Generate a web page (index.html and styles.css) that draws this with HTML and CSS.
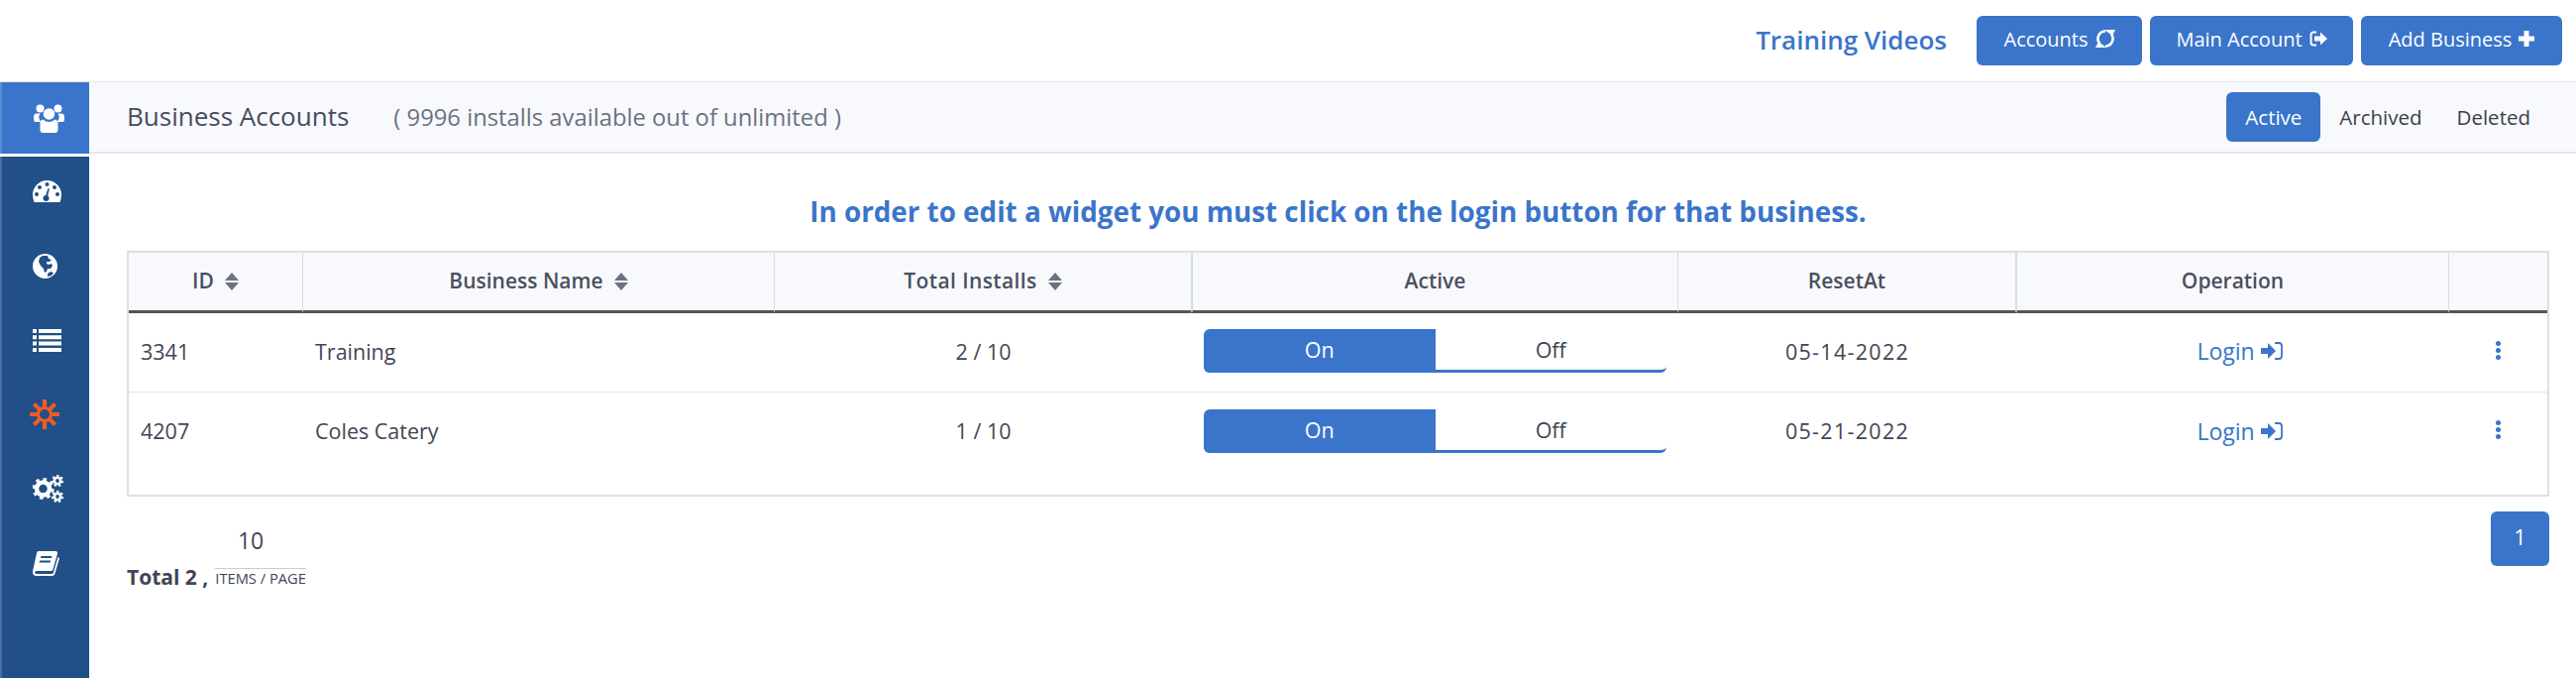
FILE: index.html
```html
<!DOCTYPE html>
<html lang="en">

<head>
  <meta charset="UTF-8">
  <meta name="viewport" content="width=device-width, initial-scale=1.0">
  <title>Business Accounts</title>
  <link rel="stylesheet" href="styles.css">
</head>

<body>
  <header class="topbar">
    <a class="training-link">Training Videos</a>
    <button class="btn btn-accounts">Accounts
      <svg class="btn-icon" width="20" height="24" viewBox="0 0 20 24"><path d="M10 4.500a7.500 7.500 0 0 0-6 12" fill="none" stroke="#fff" stroke-width="2.600"/><path d="M10 19.500a7.500 7.500 0 0 0 6-12" fill="none" stroke="#fff" stroke-width="2.600"/><path d="M9 3h11l-3 6zM11 21H0l3-6z" fill="#fff"/></svg>
    </button>
    <button class="btn btn-main">Main Account
      <svg class="btn-icon" width="18" height="16" viewBox="0 0 18 16"><path d="M7 1.500H4A2.500 2.500 0 0 0 1.500 4v8A2.500 2.500 0 0 0 4 14.500h3" fill="none" stroke="#fff" stroke-width="2"/><path d="M5 5.500h6V1.500L18 8l-7 6.500v-4H5z" fill="#fff"/></svg>
    </button>
    <button class="btn btn-add">Add Business
      <svg class="btn-icon" width="16" height="16" viewBox="0 0 16 16"><path d="M5.500 0h5v5.500H16v5h-5.500V16h-5v-5.500H0v-5h5.500z" fill="#fff"/></svg>
    </button>
  </header>

  <div class="layout">
    <nav class="sidebar">
      <a class="side-active">
        <svg width="31" height="29" viewBox="0 0 31 29" fill="#fff"><circle cx="6.500" cy="4.500" r="4"/><circle cx="24.500" cy="4.500" r="4"/><path d="M0 13q0-3.500 3-3.500h3.500a7 7 0 0 0 .5 8v.500H2q-2 0-2-2zM31 13q0-3.500-3-3.500h-3.500a7 7 0 0 1-.5 8v.500h5q2 0 2-2z"/><circle cx="15.500" cy="10" r="5.800"/><path d="M9.500 15.500q2.500 2.500 6 2.500t6-2.500q3 .5 3 4V26q0 3-3 3h-12q-3 0-3-3v-6.500q0-3.500 3-4z"/></svg>
      </a>
      <div class="side-list">
        <a class="side-link">
          <svg width="29" height="22" viewBox="0 0 29 22"><path d="M14.500 0A14.500 14.500 0 0 0 0 14.500q0 4 1.500 7.500h26q1.500-3.500 1.500-7.500A14.500 14.500 0 0 0 14.500 0z" fill="#fff"/><g fill="#214f87"><circle cx="14.500" cy="4" r="2"/><circle cx="7" cy="7" r="2"/><circle cx="22" cy="7" r="2"/><circle cx="4" cy="14" r="2"/><circle cx="25" cy="14" r="2"/><circle cx="13.500" cy="18" r="3"/><path d="M12.500 17l3-9 1.500.5-2.500 9z"/></g></svg>
        </a>
        <a class="side-link">
          <svg width="25" height="25" viewBox="0 0 25 25"><circle cx="12.500" cy="12.500" r="12.500" fill="#fff"/><path d="M7 4l3-2h5l1 3 3 1-2 2h-3v2l2 1 3-1 1 2-2 3h-3l-1 3-2 1-1-4-3-3-2-4zM15 20l3-2 3 1-2 3-4 1z" fill="#214f87"/></svg>
        </a>
        <a class="side-link">
          <svg width="29" height="23" viewBox="0 0 29 23" fill="#fff"><path d="M0 0h4v4H0zM6 0h23v4H6zM0 6.300h4v4H0zM6 6.300h23v4H6zM0 12.600h4v4H0zM6 12.600h23v4H6zM0 19h4v4H0zM6 19h23v4H6z"/></svg>
        </a>
        <a class="side-link side-zap">
          <svg width="30" height="30" viewBox="0 0 30 30"><g stroke="#f15a24" stroke-width="4.200"><path d="M15 0v10M15 20v10M0 15h10M20 15h10M4.400 4.400l7 7M18.600 18.600l7 7M25.600 4.400l-7 7M11.400 18.600l-7 7"/></g><circle cx="15" cy="15" r="6.500" fill="none" stroke="#f15a24" stroke-width="3"/></svg>
        </a>
        <a class="side-link">
          <svg width="31" height="28" viewBox="0 0 31 28"><g fill="none" stroke="#fff"><circle cx="10.500" cy="14" r="6.500" stroke-width="4.500"/><circle cx="10.500" cy="14" r="9.600" stroke-width="3" stroke-dasharray="3.500 4"/><circle cx="25" cy="6" r="3.200" stroke-width="2.600"/><circle cx="25" cy="6" r="5.200" stroke-width="2" stroke-dasharray="2.200 2.400"/><circle cx="25" cy="22" r="3.200" stroke-width="2.600"/><circle cx="25" cy="22" r="5.200" stroke-width="2" stroke-dasharray="2.200 2.400"/></g></svg>
        </a>
        <a class="side-link">
          <svg width="27" height="25" viewBox="0 0 27 25"><path d="M6 0h17q2.500 0 2 2.500l-4.500 16q-.5 1.500-2 1.500H4q-2 0-1.800 1.500T4 23h15q1.500 0 2-1.500L25.500 6l1.500 1-4.500 15.500Q22 25 19 25H4q-4 0-4-4 0-1.500.5-3L4 2q.5-2 2-2z" fill="#fff"/><path d="M8.500 5h11l-.6 2h-11zM7.200 9.500h11l-.6 2h-11z" fill="#214f87"/></svg>
        </a>
      </div>
    </nav>

    <main class="content">
      <div class="subheader">
        <h2 class="page-title">Business Accounts</h2>
        <span class="installs">( 9996 installs available out of unlimited )</span>
        <div class="tabs">
          <a class="tab tab-active">Active</a>
          <a class="tab tab-archived">Archived</a>
          <a class="tab">Deleted</a>
        </div>
      </div>

      <div class="panel">
        <h3 class="notice">In order to edit a widget you must click on the login button for that business.</h3>

        <div class="table-wrap">
          <table class="accounts">
            <thead>
              <tr>
                <th class="col-id">ID<span class="sort"></span></th>
                <th class="col-name">Business Name<span class="sort"></span></th>
                <th class="col-total">Total Installs<span class="sort"></span></th>
                <th class="col-active strong">Active</th>
                <th class="col-reset">ResetAt</th>
                <th class="col-op strong">Operation</th>
                <th class="col-more"></th>
              </tr>
            </thead>
            <tbody>
              <tr>
                <td>3341</td>
                <td>Training</td>
                <td class="center">2 / 10</td>
                <td>
                  <div class="toggle"><span class="toggle-on">On</span><span class="toggle-off">Off</span></div>
                </td>
                <td class="center date">05-14-2022</td>
                <td class="center login-cell"><a class="login">Login
                    <svg width="22" height="18" viewBox="0 0 22 18"><path d="M0 6h7V1l8 8-8 8v-5H0z" fill="#3a75cb"/><path d="M14 1h4q3 0 3 3v10q0 3-3 3h-4" fill="none" stroke="#3a75cb" stroke-width="1.800"/></svg>
                  </a></td>
                <td class="center"><span class="kebab"><i></i><i></i><i></i></span></td>
              </tr>
              <tr>
                <td>4207</td>
                <td>Coles Catery</td>
                <td class="center">1 / 10</td>
                <td>
                  <div class="toggle"><span class="toggle-on">On</span><span class="toggle-off">Off</span></div>
                </td>
                <td class="center date">05-21-2022</td>
                <td class="center login-cell"><a class="login">Login
                    <svg width="22" height="18" viewBox="0 0 22 18"><path d="M0 6h7V1l8 8-8 8v-5H0z" fill="#3a75cb"/><path d="M14 1h4q3 0 3 3v10q0 3-3 3h-4" fill="none" stroke="#3a75cb" stroke-width="1.800"/></svg>
                  </a></td>
                <td class="center"><span class="kebab"><i></i><i></i><i></i></span></td>
              </tr>
            </tbody>
          </table>
        </div>

        <div class="table-footer">
          <div class="totals">
            <strong class="total-count">Total 2 ,</strong>
            <div class="per-page">
              <span class="per-page-value">10</span>
              <span class="per-page-label">ITEMS / PAGE</span>
            </div>
          </div>
          <a class="page-btn">1</a>
        </div>
      </div>
    </main>
  </div>
</body>

</html>
```

FILE: styles.css
```css
body {
  margin: 0;
  height: 684px;
  overflow: hidden;
  background-color: #fff;
  font-family: "Open Sans", "Lato", sans-serif;
  color: #3f4654;
}

.topbar {
  display: flex;
  justify-content: flex-end;
  align-items: center;
  gap: 8px;
  height: 82px;
  padding-right: 14px;
}

.training-link {
  margin: 0 22px 2px 0;
  font-size: 26px;
  font-weight: 600;
  color: #3a75cb;
}

.btn {
  display: flex;
  justify-content: center;
  align-items: center;
  gap: 7px;
  height: 50px;
  padding: 0 0 4px;
  border: none;
  border-radius: 6px;
  background-color: #3a75cb; /* main blue */
  color: #fff;
  font-family: inherit;
  font-size: 20px;
}

.btn-accounts {
  width: 167px;
}

.btn-main {
  width: 205px;
}

.btn-add {
  width: 203px;
}

.layout {
  display: flex;
  height: 601px;
  border-top: 1px solid #e2e4ea;
}

.sidebar {
  display: flex;
  flex-direction: column;
  width: 90px;
  flex-shrink: 0;
}

.side-active {
  display: flex;
  justify-content: center;
  align-items: center;
  height: 72px;
  padding-left: 6px;
  box-sizing: border-box;
  border-left: 2px solid #5c8bd4;
  background-color: #3a75cb;
}

.side-list {
  display: flex;
  flex-direction: column;
  gap: 5px;
  flex-grow: 1;
  margin-top: 3px;
  border-left: 2px solid #4a6f9f;
  background-color: #214f87; /* dark blue */
}

.side-link {
  display: flex;
  align-items: center;
  height: 70px;
  padding-left: 31px;
}

.side-zap {
  padding-left: 28px;
}

.content {
  flex-grow: 1;
  min-width: 0;
}

.subheader {
  display: flex;
  align-items: center;
  box-sizing: border-box;
  height: 72px;
  padding: 0 27px 0 38px;
  border-bottom: 2px solid #e4e6ec;
  background-color: #f8f9fd;
}

.page-title {
  margin: 0 0 2px;
  font-size: 26px;
  font-weight: 400;
  color: #474d5c;
}

.installs {
  margin-left: 45px;
  font-size: 23.800px;
  color: #6b7280;
}

.tabs {
  display: flex;
  align-items: center;
  margin-left: auto;
}

.tab {
  padding: 0 19px;
  font-size: 20.500px;
  line-height: 50px;
  color: #3a3f4a;
}

.tab-active {
  border-radius: 6px;
  background-color: #3a75cb;
  color: #fff;
}

.tab-archived {
  padding-right: 16px;
}

.panel {
  padding: 0 27px 0 38px;
}

.notice {
  margin: 0;
  padding-top: 38px;
  height: 60px;
  text-align: center;
  font-size: 27.800px;
  line-height: 40px;
  font-weight: 700;
  color: #3a75cb;
}

.table-wrap {
  height: 244px;
  border: 2px solid #dddfe3;
}

.accounts {
  width: 100%;
  table-layout: fixed;
  border-collapse: separate;
  border-spacing: 0;
  font-size: 21.500px;
}

.accounts th {
  box-sizing: border-box;
  height: 61px;
  padding: 0 0 2px;
  border-right: 1px solid #d8dce8;
  border-bottom: 3px solid #555;
  background-color: #f8f9fd;
  font-size: 21px;
  font-weight: 600;
  color: #4a5060;
}

.accounts th:last-child {
  border-right: none;
}

.accounts th.strong {
  border-left: 1px solid #d3d9e4;
}

.col-id {
  width: 176px;
}

.col-name {
  width: 476px;
}

.col-total {
  width: 421px;
  letter-spacing: 0.400px;
}

.col-active {
  width: 491px;
}

.col-reset {
  width: 341px;
}

.col-op {
  width: 437px;
}

.col-more {
  width: 99px;
}

.sort {
  display: inline-block;
  position: relative;
  width: 14px;
  height: 18px;
  margin-left: 11px;
  vertical-align: -2px;
}

.sort::before,
.sort::after {
  content: "";
  position: absolute;
  left: 0;
  border-left: 7px solid transparent;
  border-right: 7px solid transparent;
}

.sort::before {
  top: 0;
  border-bottom: 8px solid #6c7280;
}

.sort::after {
  bottom: 0;
  border-top: 8px solid #6c7280;
}

.accounts td {
  box-sizing: border-box;
  height: 80px;
  padding: 0 12px 3px;
  border-bottom: 1px solid #e2e3e6;
  color: #3f4654;
}

.accounts tr:last-child td {
  border-bottom: none;
}

.center {
  text-align: center;
}

.accounts .date {
  letter-spacing: 1.300px;
}

.toggle {
  display: flex;
  height: 44px;
  box-sizing: border-box;
  border-bottom: 3px solid #3a75cb;
  border-radius: 6px;
  line-height: 41px;
  text-align: center;
}

.toggle-on {
  width: 50%;
  margin-bottom: -3px;
  border-radius: 6px 0 0 6px;
  background-color: #3a75cb;
  color: #fff;
}

.toggle-off {
  width: 50%;
}

.login-cell {
  padding-left: 26px !important;
}

.login {
  display: inline-flex;
  align-items: center;
  gap: 6px;
  font-size: 23px;
  color: #3a75cb;
}

.kebab {
  display: inline-flex;
  flex-direction: column;
  gap: 2px;
  position: relative;
  top: -10px;
}

.kebab i {
  width: 5px;
  height: 5px;
  border-radius: 50%;
  background-color: #3a75cb;
}

.table-footer {
  display: flex;
  justify-content: space-between;
  align-items: flex-start;
  padding-top: 15px;
}

.totals {
  display: flex;
  align-items: flex-end;
  gap: 7px;
  padding-top: 14px;
}

.total-count {
  font-size: 21px;
  line-height: 28px;
  margin-bottom: -4px;
}

.per-page {
  display: flex;
  flex-direction: column;
  align-items: center;
}

.per-page-value {
  font-size: 23px;
  line-height: 30px;
  margin: 0 20px 13px 0;
}

.per-page-label {
  padding: 1px 0 0;
  border-top: 1px solid #c9ccd2;
  font-size: 14.700px;
  line-height: 17px;
  white-space: nowrap;
}

.page-btn {
  width: 59px;
  height: 55px;
  border-radius: 6px;
  background-color: #3a75cb;
  color: #fff;
  font-size: 21px;
  line-height: 53px;
  text-align: center;
}
```
